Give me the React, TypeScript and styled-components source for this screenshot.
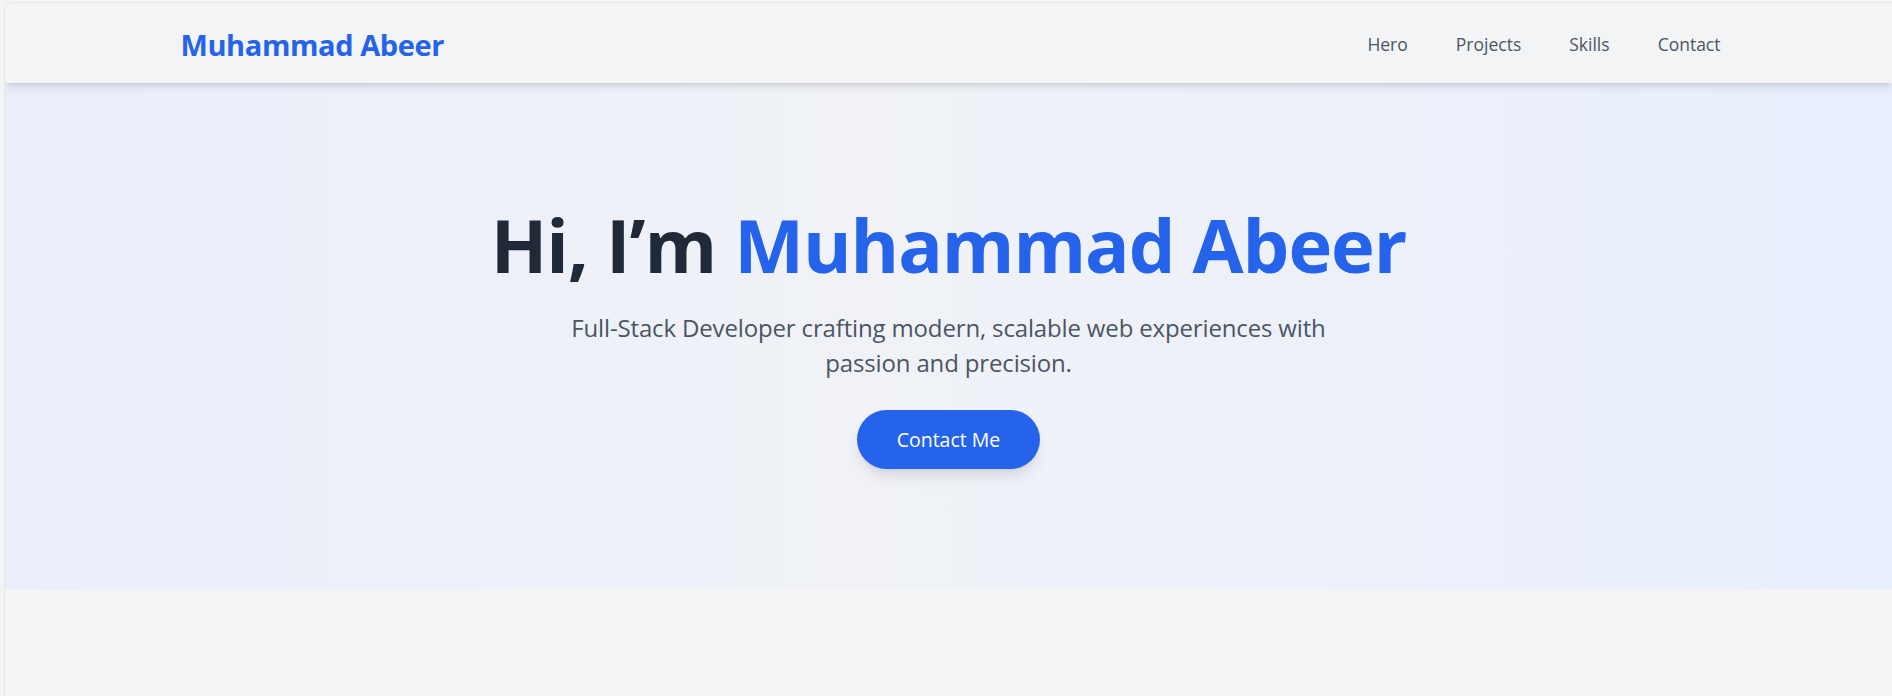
import React from "react";
import styled, { createGlobalStyle } from "styled-components";

const GlobalStyle = createGlobalStyle`
  * { box-sizing: border-box; }
  html, body { margin: 0; padding: 0; }
  body {
    background: #f4f4f4;
    font-family: "Open Sans", "Noto Sans", Arial, sans-serif;
    -webkit-font-smoothing: antialiased;
  }
`;

const Frame = styled.div`
  margin: 2px 0 0 4px;
  height: 694px;
  border-top: 1px solid #e6e6e6;
  border-left: 1px solid #e4e4e4;
  border-top-left-radius: 9px;
  overflow: hidden;
  background: #f3f4f6;
  display: flex;
  flex-direction: column;
`;

const NavBar = styled.header`
  position: relative;
  z-index: 2;
  height: 80px;
  flex: none;
  background: #f3f4f6;
  box-shadow: 0 5px 8px -1px rgba(0, 0, 0, 0.1), 0 2px 5px -2px rgba(0, 0, 0, 0.1);
`;

const Container = styled.div`
  max-width: 1600px;
  height: 100%;
  margin: 0 auto;
  padding: 0 30px;
  display: flex;
  align-items: center;
  justify-content: space-between;
`;

const Logo = styled.a`
  font-size: 29px;
  font-weight: 700;
  color: #2563eb;
  text-decoration: none;
  letter-spacing: -0.4px;
  margin-left: 2px;
  margin-top: 2px;
`;

const NavLinks = styled.nav`
  display: flex;
  align-items: center;
  gap: 48px;
  margin-top: 2px;
  margin-right: -2px;
`;

const NavLink = styled.a`
  font-size: 17.5px;
  font-weight: 500;
  color: #4b5563;
  text-decoration: none;
  letter-spacing: 0;
`;

const Hero = styled.section`
  flex: none;
  height: 506px;
  padding: 124px 30px 116px;
  background: linear-gradient(to right, #e9eefa 0%, #f0f2f7 45%, #eef1f8 60%, #e7eefc 100%);
  display: flex;
  flex-direction: column;
  align-items: center;
  text-align: center;
`;

const Heading = styled.h1`
  margin: 0 0 28px;
  font-size: 74px;
  line-height: 75px;
  font-weight: 700;
  color: #1f2937;
  letter-spacing: -1.05px;
`;

const Accent = styled.span`
  color: #2563eb;
`;

const Subtitle = styled.p`
  margin: 0 0 30px;
  max-width: 800px;
  font-size: 24px;
  line-height: 35px;
  color: #4b5563;
  letter-spacing: -0.15px;
`;

const Button = styled.a`
  display: inline-flex;
  align-items: center;
  justify-content: center;
  height: 59px;
  padding: 0 40px;
  border-radius: 9999px;
  background: #2563eb;
  color: #ffffff;
  font-size: 19.5px;
  text-decoration: none;
  letter-spacing: 0;
  box-shadow: 0 10px 15px -3px rgba(0, 0, 0, 0.1), 0 4px 6px -4px rgba(0, 0, 0, 0.1);
`;

const Rest = styled.section`
  flex: 1;
  background: #f3f4f6;
`;

export default function App() {
  return (
    <>
      <GlobalStyle />
      <Frame>
        <NavBar>
          <Container>
            <Logo href="#hero">Muhammad Abeer</Logo>
            <NavLinks>
              <NavLink href="#hero">Hero</NavLink>
              <NavLink href="#projects">Projects</NavLink>
              <NavLink href="#skills">Skills</NavLink>
              <NavLink href="#contact">Contact</NavLink>
            </NavLinks>
          </Container>
        </NavBar>
        <Hero id="hero">
          <Heading>
            Hi, I’m <Accent>Muhammad Abeer</Accent>
          </Heading>
          <Subtitle>
            Full-Stack Developer crafting modern, scalable web experiences with passion and precision.
          </Subtitle>
          <Button href="#contact">Contact Me</Button>
        </Hero>
        <Rest />
      </Frame>
    </>
  );
}
